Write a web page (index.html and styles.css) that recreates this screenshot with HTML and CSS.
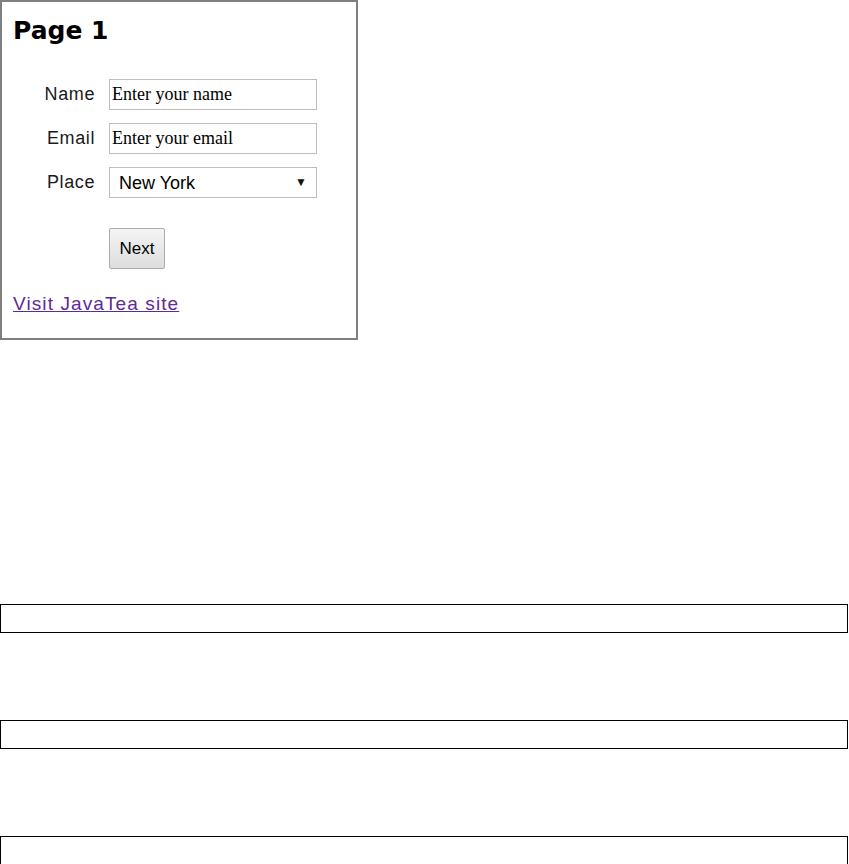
FILE: index.html
```html
<!DOCTYPE html>
<html lang="en">
<head>
  <meta charset="UTF-8" />
  <title>Page 1</title>
  <link rel="stylesheet" href="styles.css">
</head>
<body>

  <div class="panel">
    <h1>Page 1</h1>

    <form class="form">
      <label for="name">Name</label>
      <input type="text" id="name" value="Enter your name">

      <label for="email">Email</label>
      <input type="text" id="email" value="Enter your email">

      <label for="place">Place</label>
      <span class="select-wrap">
        <select id="place">
          <option>New York</option>
          <option>Tokyo</option>
          <option>London</option>
        </select>
      </span>

      <span></span>
      <button type="button" class="next-btn">Next</button>
    </form>

    <a class="site-link" href="#">Visit JavaTea site</a>
  </div>

  <div class="frame frame-first"></div>
  <div class="frame"></div>
  <div class="frame"></div>

</body>
</html>
```

FILE: styles.css
```css
body {
  margin: 0;
  font-family: "Liberation Sans", Arial, sans-serif;
  background: #fff;
  color: #111;
}

.panel {
  box-sizing: border-box;
  width: 358px;
  border: 2px solid #7f7f7f;
  padding: 15px 11px 24px;
}

.panel h1 {
  margin: 0;
  font-family: "DejaVu Sans", sans-serif;
  font-weight: bold;
  font-size: 25px;
  line-height: 28px;
  color: #000;
}

.form {
  display: grid;
  grid-template-columns: 82px 208px;
  column-gap: 14px;
  row-gap: 13px;
  margin-top: 34px;
  align-items: center;
}

.form label {
  text-align: right;
  font-size: 18px;
  letter-spacing: 0.6px;
  color: #1a1a1a;
}

.form input {
  box-sizing: border-box;
  width: 208px;
  height: 31px;
  margin: 0;
  padding: 0 2px;
  border: 1px solid #bdbdbd;
  font-family: "Liberation Serif", "Times New Roman", serif;
  font-size: 18px;
  color: #000;
}

.select-wrap {
  position: relative;
  display: block;
}

.select-wrap select {
  box-sizing: border-box;
  width: 208px;
  height: 31px;
  margin: 0;
  padding: 0 0 0 9px;
  border: 1px solid #bdbdbd;
  background: #fff;
  appearance: none;
  -webkit-appearance: none;
  font-family: "Liberation Sans", Arial, sans-serif;
  font-size: 18px;
  color: #000;
}

.select-wrap::after {
  content: "\25BC";
  position: absolute;
  right: 10px;
  top: 8px;
  font-size: 12px;
  color: #111;
  pointer-events: none;
}

.next-btn {
  justify-self: start;
  width: 56px;
  height: 41px;
  margin-top: 17px;
  padding: 0;
  border: 1px solid #acacac;
  border-radius: 2px;
  background: linear-gradient(#f4f4f4, #dddddd);
  font-family: "Liberation Sans", Arial, sans-serif;
  font-size: 17px;
  color: #000;
}

.site-link {
  display: block;
  margin-top: 24px;
  font-size: 19px;
  line-height: 21px;
  letter-spacing: 1.1px;
  color: #5b2b9c;
}

.frame {
  box-sizing: border-box;
  width: 848px;
  height: 29px;
  margin-top: 87px;
  border: 1px solid #000;
}

.frame-first {
  margin-top: 264px;
}
```
